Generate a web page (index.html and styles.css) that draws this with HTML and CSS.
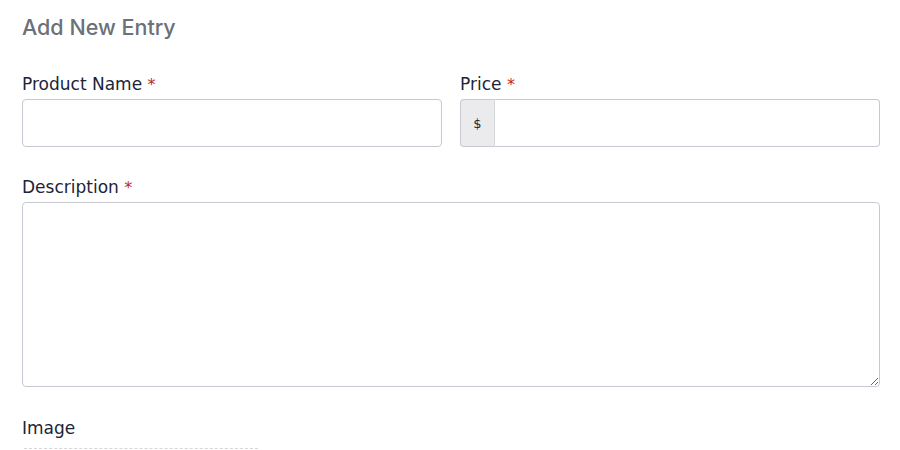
FILE: index.html
```html
<!DOCTYPE html>
<html>
<head>
<meta charset="utf-8">
<link rel="stylesheet" href="styles.css">
</head>
<body>
<div class="page">
  <h1 class="title">Add New Entry</h1>
  <div class="row">
    <div class="field">
      <label class="label">Product Name <span class="req">*</span></label>
      <input class="input" type="text">
    </div>
    <div class="field">
      <label class="label">Price <span class="req">*</span></label>
      <div class="group">
        <span class="prefix">$</span>
        <input class="input group-input" type="text">
      </div>
    </div>
  </div>
  <div class="field desc">
    <label class="label">Description <span class="req">*</span></label>
    <textarea class="textarea"></textarea>
  </div>
  <div class="field image">
    <label class="label">Image</label>
    <div class="dropzone"></div>
  </div>
</div>
</body>
</html>
```

FILE: styles.css
```css
* { box-sizing: border-box; }
html, body { margin: 0; padding: 0; background: #fff; }
body { font-family: "DejaVu Sans", "Open Sans", sans-serif; color: #1c2438; }
.page { width: 900px; padding: 14px 20px 0 22px; }
.title {
  margin: 0;
  font-family: Inter, "Liberation Sans", sans-serif;
  font-weight: 500;
  font-size: 21.5px;
  line-height: 26px;
  color: #6b7079;
}
.row {
  display: grid;
  grid-template-columns: 1fr 1fr;
  gap: 18px;
  margin-top: 32px;
}
.field { display: flex; flex-direction: column; }
.label {
  display: block;
  height: 24px;
  font-size: 17px;
  line-height: 24px;
  margin-bottom: 3px;
  color: #1c2438;
}
.req { color: #c0262d; font-size: 16px; line-height: 1; }
.input {
  height: 48px;
  border: 1px solid #c6cad0;
  border-radius: 4px;
  background: #fff;
  font: inherit;
  padding: 0 10px;
  outline: none;
}
.group { display: flex; height: 48px; }
.prefix {
  width: 35px;
  display: flex;
  align-items: center;
  justify-content: center;
  background: #ebebed;
  border: 1px solid #c6cad0;
  border-right: 1px solid #d3d6db;
  border-radius: 4px 0 0 4px;
  font-size: 13px;
  color: #1c2438;
}
.group-input {
  flex: 1;
  border-left: none;
  border-radius: 0 4px 4px 0;
}
.desc { margin-top: 28px; }
.textarea {
  height: 185px;
  border: 1px solid #c6cad0;
  border-radius: 4px;
  resize: vertical;
  font: inherit;
  outline: none;
}
.image { margin-top: 29px; }
.dropzone {
  width: 234px;
  margin-left: 2px;
  margin-top: 5px;
  border-top: 1px dashed #d4d7db;
}
```
